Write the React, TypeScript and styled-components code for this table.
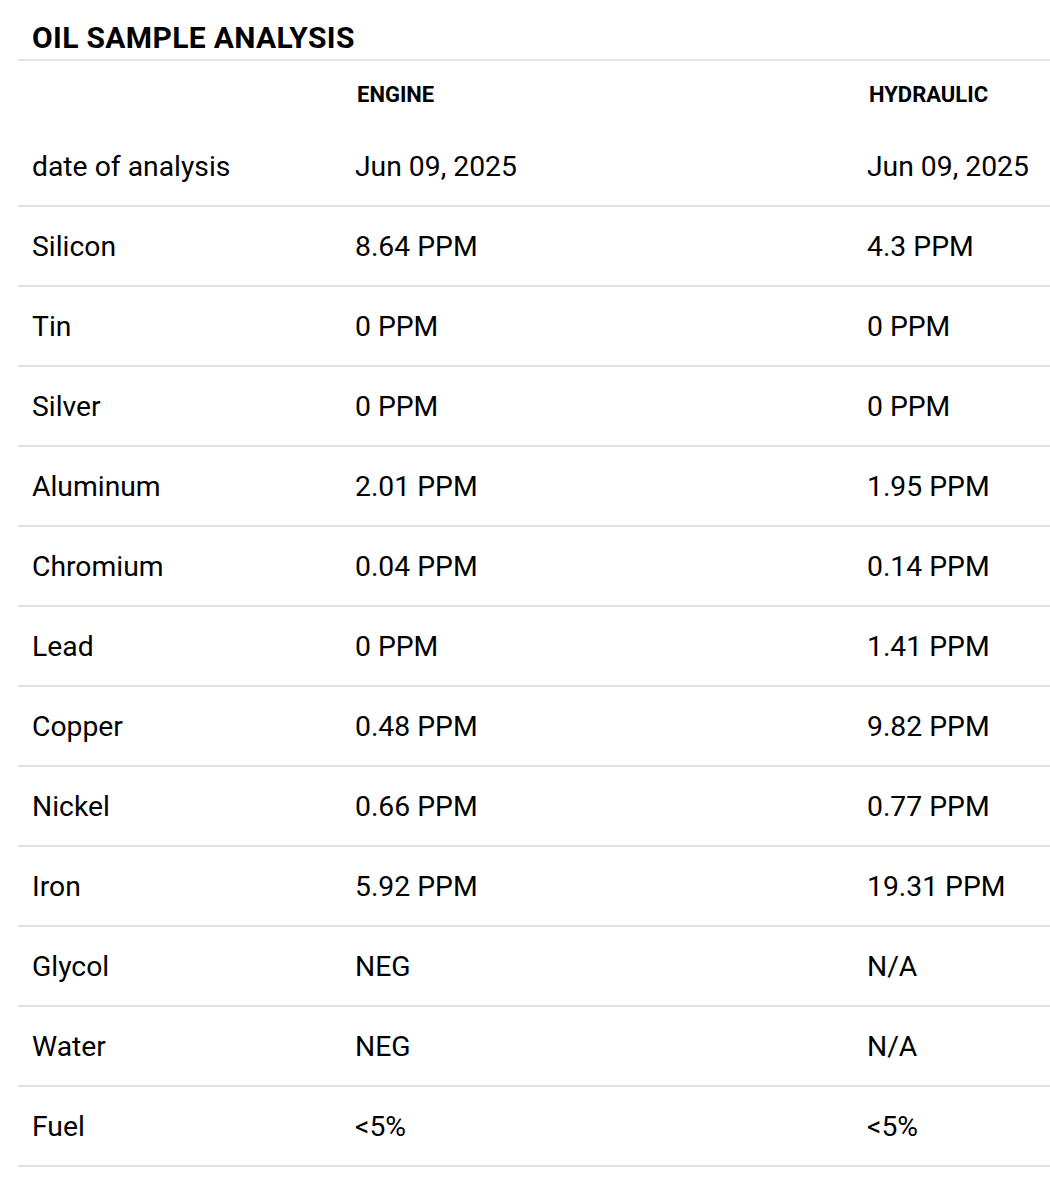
import React from 'react';
import styled, { createGlobalStyle } from 'styled-components';

interface AnalysisRow {
  label: string;
  engine: string;
  hydraulic: string;
}

const rows: AnalysisRow[] = [
  { label: 'date of analysis', engine: 'Jun 09, 2025', hydraulic: 'Jun 09, 2025' },
  { label: 'Silicon', engine: '8.64 PPM', hydraulic: '4.3 PPM' },
  { label: 'Tin', engine: '0 PPM', hydraulic: '0 PPM' },
  { label: 'Silver', engine: '0 PPM', hydraulic: '0 PPM' },
  { label: 'Aluminum', engine: '2.01 PPM', hydraulic: '1.95 PPM' },
  { label: 'Chromium', engine: '0.04 PPM', hydraulic: '0.14 PPM' },
  { label: 'Lead', engine: '0 PPM', hydraulic: '1.41 PPM' },
  { label: 'Copper', engine: '0.48 PPM', hydraulic: '9.82 PPM' },
  { label: 'Nickel', engine: '0.66 PPM', hydraulic: '0.77 PPM' },
  { label: 'Iron', engine: '5.92 PPM', hydraulic: '19.31 PPM' },
  { label: 'Glycol', engine: 'NEG', hydraulic: 'N/A' },
  { label: 'Water', engine: 'NEG', hydraulic: 'N/A' },
  { label: 'Fuel', engine: '<5%', hydraulic: '<5%' },
];

const GlobalStyle = createGlobalStyle`
  body {
    margin: 0;
    background: #ffffff;
    font-family: Roboto, "Liberation Sans", sans-serif;
    color: #000000;
  }
`;

const Section = styled.section`
  padding-left: 18px;
  width: 1032px;
`;

const Title = styled.h2`
  margin: 0;
  padding: 21px 0 4px 14px;
  font-size: 30px;
  line-height: 34px;
  font-weight: 700;
  letter-spacing: 0.35px;
  border-bottom: 2px solid #e3e3e3;
`;

const Table = styled.table`
  width: 100%;
  border-collapse: collapse;
  table-layout: fixed;
`;

const HeadCell = styled.th`
  height: 66px;
  padding: 0 0 0 16px;
  text-align: left;
  font-size: 22px;
  font-weight: 700;
  vertical-align: middle;
`;

const Row = styled.tr`
  border-bottom: 2px solid #e3e3e3;
`;

const Cell = styled.td`
  height: 78px;
  padding: 0 0 0 14px;
  font-size: 28.3px;
  font-weight: 400;
  white-space: nowrap;
  vertical-align: middle;
`;

export default function App() {
  return (
    <>
      <GlobalStyle />
      <Section>
        <Title>OIL SAMPLE ANALYSIS</Title>
        <Table>
          <colgroup>
            <col style={{ width: 323 }} />
            <col style={{ width: 512 }} />
            <col />
          </colgroup>
          <thead>
            <tr>
              <HeadCell />
              <HeadCell>ENGINE</HeadCell>
              <HeadCell>HYDRAULIC</HeadCell>
            </tr>
          </thead>
          <tbody>
            {rows.map((r) => (
              <Row key={r.label}>
                <Cell>{r.label}</Cell>
                <Cell>{r.engine}</Cell>
                <Cell>{r.hydraulic}</Cell>
              </Row>
            ))}
          </tbody>
        </Table>
      </Section>
    </>
  );
}
